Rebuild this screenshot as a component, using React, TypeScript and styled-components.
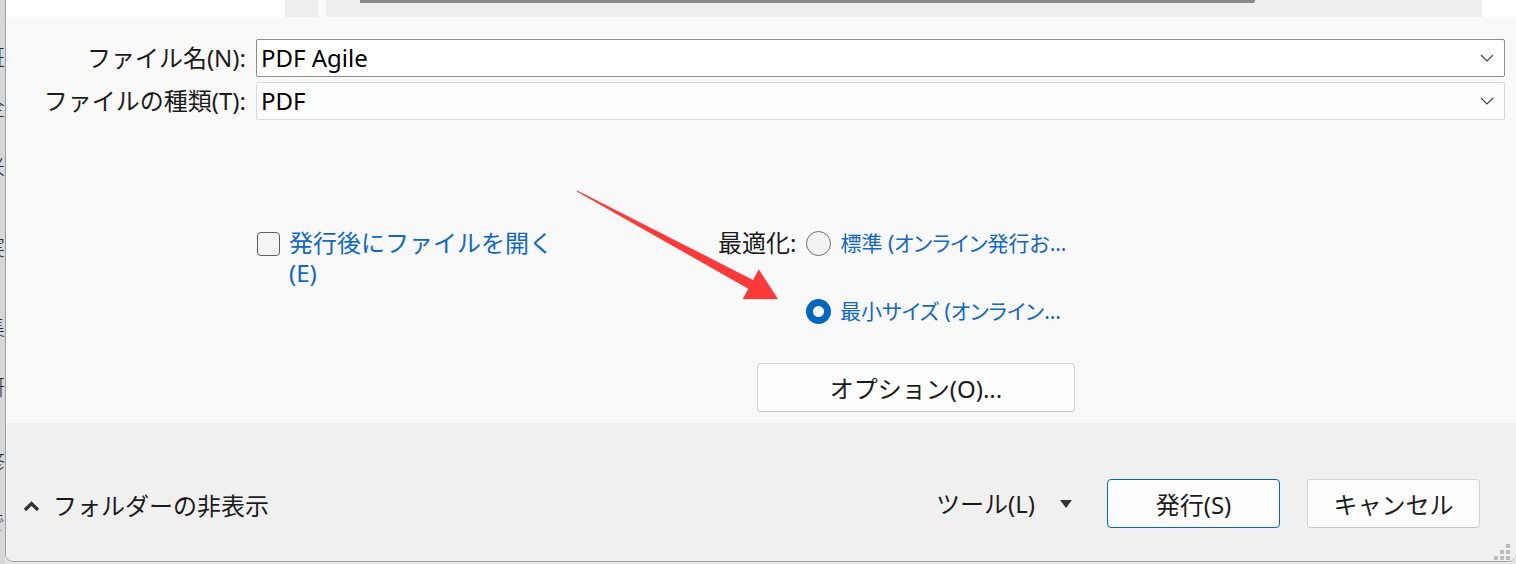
import React from "react";
import styled, { createGlobalStyle } from "styled-components";

const GlobalStyle = createGlobalStyle`
  html, body { margin: 0; padding: 0; background: #e4e4e4; }
  body { font-family: "Noto Sans", "Noto Sans CJK JP", sans-serif; }
`;

const FONT = `"Noto Sans", "Noto Sans CJK JP", sans-serif`;
const BLUE_TEXT = "#0f67c8";

const Page = styled.div`
  position: relative;
  width: 1516px;
  height: 564px;
  display: flex;
  overflow: hidden;
  background: #e6e6e6;
  font-family: ${FONT};
`;

const Backdrop = styled.div`
  width: 5px;
  flex: none;
  background: #d7d7d7;
  overflow: hidden;
  display: flex;
  flex-direction: column;
`;

const BackdropChar = styled.span<{ $mt: number }>`
  display: block;
  margin-top: ${(p) => p.$mt}px;
  margin-left: -17px;
  width: 24px;
  font-size: 22px;
  line-height: 24px;
  color: #2a2a2a;
  font-family: "Noto Sans CJK JP", serif;
  font-weight: 300;
`;

const Window = styled.div`
  flex: 1;
  height: 562px;
  display: flex;
  flex-direction: column;
  border-left: 1px solid #9e9e9e;
  border-bottom: 1px solid #a3a3a3;
  border-bottom-left-radius: 8px;
  border-bottom-right-radius: 8px;
  overflow: hidden;
  box-sizing: border-box;
`;

const TopStrip = styled.div`
  height: 17px;
  flex: none;
  display: flex;
`;

const StripPane = styled.div<{ $w?: number; $bg: string }>`
  width: ${(p) => (p.$w ? `${p.$w}px` : "auto")};
  flex: ${(p) => (p.$w ? "none" : "1")};
  background: ${(p) => p.$bg};
  display: flex;
`;

const ScrollThumb = styled.div`
  margin-left: 34px;
  width: 895px;
  height: 3px;
  background: #8a8a8a;
  border-bottom-right-radius: 2px;
`;

const Form = styled.div`
  flex: 1;
  background: #f9f9f9;
  padding: 22px 11px 0 0;
  display: flex;
  flex-direction: column;
`;

const FieldGrid = styled.div`
  display: grid;
  grid-template-columns: 240px 1fr;
  column-gap: 10px;
  row-gap: 5px;
  align-items: center;
`;

const FieldLabel = styled.label`
  text-align: right;
  font-size: 24px;
  line-height: 30px;
  color: #1b1b1b;
  white-space: nowrap;
`;

const ComboBox = styled.div<{ $focused?: boolean }>`
  height: 38px;
  box-sizing: border-box;
  border: 1px solid ${(p) => (p.$focused ? "#8d8d8d" : "#d9d9d9")};
  border-radius: 2px;
  background: ${(p) => (p.$focused ? "#ffffff" : "#fdfdfd")};
  display: flex;
  align-items: center;
  padding: 0 10px 0 4px;
`;

const ComboText = styled.span`
  flex: 1;
  font-size: 24px;
  line-height: 30px;
  color: #000;
`;

const Chevron = () => (
  <svg width="14" height="8" viewBox="0 0 14 8">
    <path d="M1 1 L7 7 L13 1" fill="none" stroke="#3f3f3f" strokeWidth="1.1" />
  </svg>
);

const OptionsArea = styled.div`
  margin-top: 108px;
  padding-left: 250px;
  display: flex;
  align-items: flex-start;
`;

const CheckOption = styled.div`
  width: 462px;
  flex: none;
  display: flex;
  align-items: flex-start;
  gap: 9px;
`;

const CheckBox = styled.span`
  margin-top: 4px;
  margin-left: 1px;
  width: 23px;
  height: 24px;
  box-sizing: border-box;
  border: 1.5px solid #5e5e5e;
  border-radius: 4px;
  background: #f4f4f4;
  flex: none;
`;

const BlueLabel = styled.span`
  font-size: 24px;
  line-height: 30px;
  color: ${BLUE_TEXT};
  max-width: 268px;
`;

const OptimizeGroup = styled.div`
  display: flex;
  flex-direction: column;
`;

const OptimizeRow = styled.div<{ $indent?: number; $mt?: number }>`
  display: flex;
  align-items: center;
  gap: 10px;
  padding-left: ${(p) => p.$indent ?? 0}px;
  margin-top: ${(p) => p.$mt ?? 0}px;
`;

const PlainLabel = styled.span`
  font-size: 24px;
  line-height: 30px;
  color: #1b1b1b;
  white-space: nowrap;
`;

const RadioItem = styled.div`
  display: flex;
  align-items: center;
  gap: 9px;
`;

const Radio = styled.span<{ $checked?: boolean }>`
  width: 25px;
  height: 25px;
  box-sizing: border-box;
  border-radius: 50%;
  flex: none;
  display: flex;
  align-items: center;
  justify-content: center;
  background: ${(p) => (p.$checked ? "#0067c0" : "#f3f3f3")};
  border: ${(p) => (p.$checked ? "none" : "1.5px solid #6f6f6f")};
  &::after {
    content: "";
    display: ${(p) => (p.$checked ? "block" : "none")};
    width: 11px;
    height: 11px;
    border-radius: 50%;
    background: #ffffff;
  }
`;

const RadioText = styled.span<{ $w: number }>`
  font-size: 21px;
  line-height: 30px;
  color: ${BLUE_TEXT};
  font-feature-settings: "palt";
  white-space: nowrap;
  overflow: hidden;
  text-overflow: ellipsis;
  max-width: ${(p) => p.$w}px;
`;

const Button = styled.button<{ $w: number; $primary?: boolean }>`
  width: ${(p) => p.$w}px;
  height: 49px;
  box-sizing: border-box;
  border: 1px solid ${(p) => (p.$primary ? "#0067c0" : "#d3d3d3")};
  border-bottom-color: ${(p) => (p.$primary ? "#0067c0" : "#c4c4c4")};
  border-radius: 4px;
  background: #fdfdfd;
  font-family: ${FONT};
  font-size: 24px;
  color: #1b1b1b;
  padding: 0;
  display: flex;
  align-items: center;
  justify-content: center;
  flex: none;
`;

const OptionsButton = styled(Button)`
  margin-top: 37px;
  margin-left: 39px;
`;

const Footer = styled.div`
  position: relative;
  height: 138px;
  flex: none;
  background: #f0f0f0;
  box-sizing: border-box;
  padding: 56px 36px 0 17px;
  display: flex;
  align-items: flex-start;
`;

const FolderToggle = styled.div`
  margin-top: 12px;
  display: flex;
  align-items: center;
  gap: 13px;
  font-size: 24px;
  line-height: 30px;
  color: #1b1b1b;
`;

const FooterRight = styled.div`
  margin-left: auto;
  display: flex;
  align-items: center;
  height: 49px;
`;

const ToolMenu = styled.div`
  display: flex;
  align-items: center;
  gap: 25px;
  margin-right: 35px;
  font-size: 24px;
  line-height: 30px;
  color: #1b1b1b;
`;

const ButtonRow = styled.div`
  display: flex;
  gap: 27px;
`;

const Grip = styled.div`
  position: absolute;
  right: 6px;
  bottom: 1px;
  display: grid;
  grid-template-columns: repeat(3, 4px);
  grid-template-rows: repeat(3, 4px);
  gap: 2px;
`;

const GripDot = styled.span<{ $on: boolean }>`
  background: ${(p) => (p.$on ? "#bcbcbc" : "transparent")};
`;

const ArrowLayer = styled.svg`
  position: absolute;
  left: 0;
  top: 0;
  pointer-events: none;
`;

const backdropChars: { ch: string; mt: number }[] = [
  { ch: "班", mt: 43 },
  { ch: "全", mt: 26 },
  { ch: "米", mt: 36 },
  { ch: "実", mt: 56 },
  { ch: "集", mt: 56 },
  { ch: "研", mt: 36 },
  { ch: "修", mt: 51 },
  { ch: "で", mt: 36 },
];

const gripPattern = [false, false, true, false, true, true, true, true, true];

export default function App() {
  return (
    <>
      <GlobalStyle />
      <Page>
        <Backdrop>
          {backdropChars.map((c, i) => (
            <BackdropChar key={i} $mt={c.mt}>
              {c.ch}
            </BackdropChar>
          ))}
        </Backdrop>
        <Window>
          <TopStrip>
            <StripPane $w={279} $bg="#ffffff" />
            <StripPane $w={33} $bg="#eeeeee" />
            <StripPane $w={8} $bg="#fbfbfb" />
            <StripPane $bg="#efefef">
              <ScrollThumb />
            </StripPane>
            <StripPane $w={34} $bg="#ffffff" />
          </TopStrip>
          <Form>
            <FieldGrid>
              <FieldLabel>ファイル名(N):</FieldLabel>
              <ComboBox $focused>
                <ComboText>PDF Agile</ComboText>
                <Chevron />
              </ComboBox>
              <FieldLabel>ファイルの種類(T):</FieldLabel>
              <ComboBox>
                <ComboText>PDF</ComboText>
                <Chevron />
              </ComboBox>
            </FieldGrid>
            <OptionsArea>
              <CheckOption>
                <CheckBox />
                <BlueLabel>発行後にファイルを開く(E)</BlueLabel>
              </CheckOption>
              <OptimizeGroup>
                <OptimizeRow>
                  <PlainLabel>最適化:</PlainLabel>
                  <RadioItem>
                    <Radio />
                    <RadioText $w={236}>標準 (オンライン発行および印刷)</RadioText>
                  </RadioItem>
                </OptimizeRow>
                <OptimizeRow $indent={88} $mt={38}>
                  <RadioItem>
                    <Radio $checked />
                    <RadioText $w={224}>最小サイズ (オンライン発行)</RadioText>
                  </RadioItem>
                </OptimizeRow>
                <OptionsButton $w={318}>オプション(O)...</OptionsButton>
              </OptimizeGroup>
            </OptionsArea>
          </Form>
          <Footer>
            <FolderToggle>
              <svg width="17" height="11" viewBox="0 0 17 11">
                <path d="M2 9 L8.5 2.5 L15 9" fill="none" stroke="#333" strokeWidth="3.2" />
              </svg>
              フォルダーの非表示
            </FolderToggle>
            <FooterRight>
              <ToolMenu>
                ツール(L)
                <svg width="12" height="8" viewBox="0 0 12 8">
                  <path d="M0 0 H12 L6 8 Z" fill="#333" />
                </svg>
              </ToolMenu>
              <ButtonRow>
                <Button $w={173} $primary>
                  発行(S)
                </Button>
                <Button $w={173}>キャンセル</Button>
              </ButtonRow>
            </FooterRight>
            <Grip>
              {gripPattern.map((on, i) => (
                <GripDot key={i} $on={on} />
              ))}
            </Grip>
          </Footer>
        </Window>
        <ArrowLayer width="1516" height="564" viewBox="0 0 1516 564">
          <polygon
            points="577.2,190.4 753.1,279.9 758.8,269.3 778,299 742.6,299.3 748.3,288.7 576.8,191.6"
            fill="#fc3a3a"
          />
        </ArrowLayer>
      </Page>
    </>
  );
}
